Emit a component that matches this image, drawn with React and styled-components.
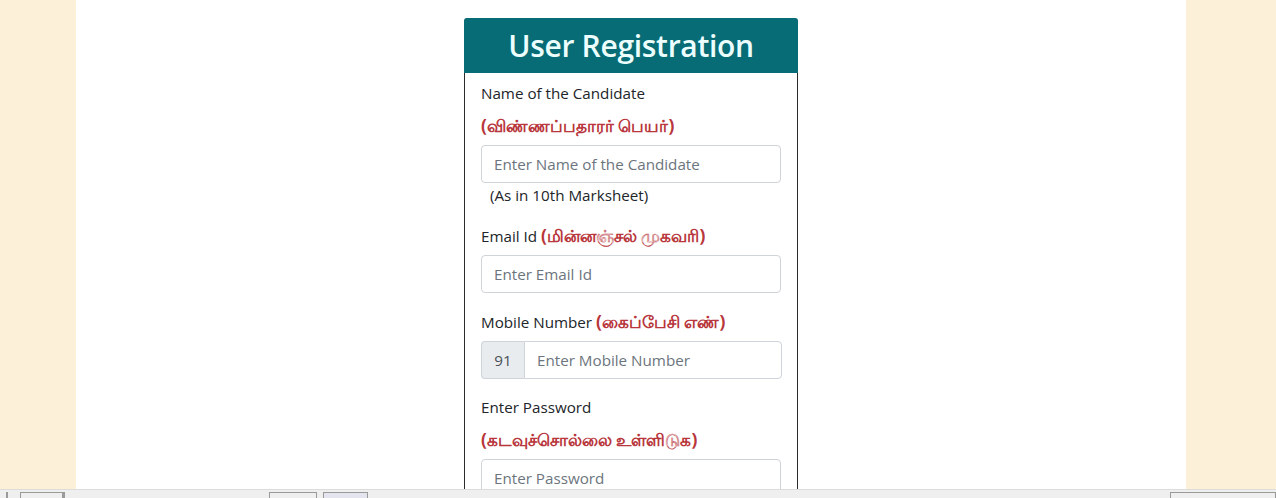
import React from 'react'
import styled, { createGlobalStyle } from 'styled-components'

const GlobalStyle = createGlobalStyle`
  html, body {
    margin: 0;
    padding: 0;
    height: 100%;
    overflow: hidden;
  }
  body {
    background: #fdf0d8;
    font-family: "Open Sans", "Noto Sans", "DejaVu Sans", sans-serif;
    color: #212529;
  }
`

const Page = styled.div`
  height: 490px;
  padding-left: 76px;
  overflow: hidden;
`

const Container = styled.div`
  width: 1110px;
  height: 100%;
  background: #ffffff;
  display: flex;
  justify-content: center;
  padding-top: 18px;
  box-sizing: border-box;
`

const Card = styled.div`
  width: 334px;
  border: 1px solid #2b2b2b;
  border-radius: 4px 4px 0 0;
  box-sizing: border-box;
  align-self: flex-start;
  background: #fff;
`

const Header = styled.div`
  height: 55px;
  background: #076c75;
  border-radius: 3px 3px 0 0;
  display: flex;
  align-items: center;
  justify-content: center;
  margin: -1px -1px 0;
`

const Title = styled.h2`
  margin: 0;
  font-size: 30px;
  font-weight: 600;
  color: #ecfefe;
  letter-spacing: -0.3px;
`

const Body = styled.div`
  padding: 9px 16px 0;
`

const Group = styled.div`
  margin-bottom: ${p => p.$gap || 18}px;
`

const Label = styled.div`
  font-size: 15.2px;
  line-height: 22px;
  height: 22px;
  white-space: nowrap;
  margin-bottom: ${p => p.$mb ?? 8}px;
`

const Tamil = styled.span`
  color: #b8363c;
  font-weight: 700;
  font-size: 17.4px;
  line-height: 1;
`

const TamilLine = styled.div`
  color: #b8363c;
  font-weight: 700;
  font-size: 17.4px;
  line-height: 22px;
  height: 22px;
  margin-bottom: ${p => p.$mb ?? 9}px;
`

const Input = styled.input`
  display: block;
  width: 100%;
  height: 38px;
  box-sizing: border-box;
  border: 1px solid #ced4da;
  border-radius: 4px;
  padding: 0 12px;
  font-family: inherit;
  font-size: 15.2px;
  color: #495057;
  background: #fff;
  outline: none;
  &::placeholder {
    color: #6c757d;
  }
  ${p => p.$joined && `
    border-radius: 0 4px 4px 0;
    flex: 1;
    width: auto;
    min-width: 0;
  `}
`

const Hint = styled.div`
  font-size: 15.2px;
  line-height: 22px;
  padding-left: 9px;
  margin-top: 1px;
`

const InputGroup = styled.div`
  display: flex;
  width: 301px;
`

const Prefix = styled.span`
  width: 43px;
  height: 38px;
  box-sizing: border-box;
  display: flex;
  align-items: center;
  justify-content: center;
  background: #e9ecef;
  border: 1px solid #ced4da;
  border-right: none;
  border-radius: 4px 0 0 4px;
  font-size: 15.2px;
  color: #495057;
`

const StatusBar = styled.div`
  position: fixed;
  left: 0;
  right: 0;
  bottom: 0;
  height: 8px;
  background: #efefef;
  border-top: 1px solid #dcdcdc;
  display: flex;
  align-items: flex-end;
`

const Seg = styled.span`
  height: 6px;
  margin-left: ${p => p.$ml}px;
  width: ${p => p.$w}px;
  border: 1px solid #9a9a9a;
  border-bottom: none;
  box-sizing: border-box;
  background: ${p => p.$bg || 'transparent'};
`

export default function App() {
  return (
    <>
      <GlobalStyle />
      <Page>
        <Container>
          <Card>
            <Header>
              <Title>User Registration</Title>
            </Header>
            <Body>
              <Group $gap={19}>
                <Label $mb={10}>Name of the Candidate</Label>
                <TamilLine>(விண்ணப்பதாரர் பெயர்)</TamilLine>
                <Input placeholder="Enter Name of the Candidate" />
                <Hint>(As in 10th Marksheet)</Hint>
              </Group>
              <Group>
                <Label>
                  Email Id <Tamil>(மின்னஞ்சல் முகவரி)</Tamil>
                </Label>
                <Input placeholder="Enter Email Id" />
              </Group>
              <Group $gap={17}>
                <Label>
                  Mobile Number <Tamil>(கைப்பேசி எண்)</Tamil>
                </Label>
                <InputGroup>
                  <Prefix>91</Prefix>
                  <Input $joined placeholder="Enter Mobile Number" />
                </InputGroup>
              </Group>
              <Group>
                <Label $mb={10}>Enter Password</Label>
                <TamilLine>(கடவுச்சொல்லை உள்ளிடுக)</TamilLine>
                <Input type="password" placeholder="Enter Password" />
              </Group>
            </Body>
          </Card>
        </Container>
      </Page>
      <StatusBar>
        <Seg $ml={6} $w={1} />
        <Seg $ml={12} $w={44} />
        <Seg $ml={0} $w={2} />
        <Seg $ml={204} $w={48} />
        <Seg $ml={6} $w={46} $bg="#e4e4ee" />
        <Seg $ml={802} $w={108} />
      </StatusBar>
    </>
  )
}
